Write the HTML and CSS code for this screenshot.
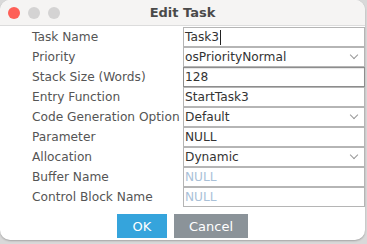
FILE: index.html
```html
<!DOCTYPE html>
<html lang="en">
<head>
    <meta charset="UTF-8">
    <title>Edit Task</title>
    <link rel="stylesheet" href="styles.css">
</head>
<body>
    <div class="window">
        <!-- Title bar -->
        <div class="titlebar">
            <div class="lights">
                <span class="light red"></span>
                <span class="light"></span>
                <span class="light"></span>
            </div>
            <div class="title">Edit Task</div>
        </div>

        <form class="task-form">
            <div class="rows">
                <label class="label">Task Name</label>
                <div class="field"><span class="value">Task3</span><span class="caret"></span></div>

                <label class="label">Priority</label>
                <div class="field select"><span class="value">osPriorityNormal</span><span class="chev"></span></div>

                <label class="label">Stack Size (Words)</label>
                <div class="field spin"><span class="value">128</span></div>

                <label class="label">Entry Function</label>
                <div class="field"><span class="value">StartTask3</span></div>

                <label class="label">Code Generation Option</label>
                <div class="field select"><span class="value">Default</span><span class="chev"></span></div>

                <label class="label">Parameter</label>
                <div class="field"><span class="value">NULL</span></div>

                <label class="label">Allocation</label>
                <div class="field select"><span class="value">Dynamic</span><span class="chev"></span></div>

                <label class="label">Buffer Name</label>
                <div class="field"><span class="value muted">NULL</span></div>

                <label class="label">Control Block Name</label>
                <div class="field"><span class="value muted">NULL</span></div>
            </div>

            <div class="buttons">
                <button class="btn ok" type="button">OK</button>
                <button class="btn cancel" type="button">Cancel</button>
            </div>
        </form>
    </div>
</body>
</html>
```
FILE: styles.css
```css
html, body {
    margin: 0;
    padding: 0;
}
body {
    width: 367px;
    height: 244px;
    background: #d9d9d9;
    font-family: "DejaVu Sans", sans-serif;
    overflow: hidden;
}
.window {
    width: 365px;
    height: 240px;
    background: #ffffff;
    border-radius: 10px;
    overflow: hidden;
    box-shadow: 0 1px 2px rgba(0, 0, 0, 0.25);
}
.titlebar {
    position: relative;
    height: 25px;
    background: #f5f4f3;
    border-bottom: 1px solid #dcdcdc;
}
.lights {
    position: absolute;
    left: 8px;
    top: 7px;
    display: flex;
    gap: 8px;
}
.light {
    width: 12px;
    height: 12px;
    border-radius: 50%;
    background: #d4d3d3;
}
.light.red {
    background: #fe5f57;
}
.title {
    text-align: center;
    line-height: 25px;
    font-size: 13px;
    font-weight: bold;
    color: #4a4a4a;
}
.task-form {
    padding-top: 1px;
}
.rows {
    display: grid;
    grid-template-columns: 151px 182px;
    grid-auto-rows: 20px;
    padding-left: 32px;
}
.label {
    font-size: 12.2px;
    line-height: 20px;
    color: #555555;
    white-space: nowrap;
}
.field {
    display: flex;
    align-items: center;
    height: 18px;
    border: 1px solid #b5b5b5;
    font-size: 12.2px;
    color: #333333;
    position: relative;
    background: #ffffff;
}
.field.spin {
    border-color: #8d8d8d;
    box-shadow: inset 0 1px 1px rgba(0, 0, 0, 0.1);
}
.value {
    padding-left: 1px;
}
.value.muted {
    color: #aac1d8;
}
.caret {
    width: 1px;
    height: 15px;
    background: #222;
    margin-left: 1px;
}
.chev {
    position: absolute;
    right: 7px;
    top: 4px;
    width: 5px;
    height: 5px;
    border-right: 1px solid #999;
    border-bottom: 1px solid #999;
    transform: rotate(45deg);
}
.buttons {
    display: flex;
    justify-content: center;
    gap: 7px;
    margin-top: 7px;
}
.btn {
    height: 24px;
    border: none;
    font-family: "DejaVu Sans", sans-serif;
    font-size: 13px;
    color: #ffffff;
    padding: 0;
}
.btn.ok {
    width: 50px;
    background: #35a4dc;
}
.btn.cancel {
    width: 74px;
    background: #8b9399;
}
```
